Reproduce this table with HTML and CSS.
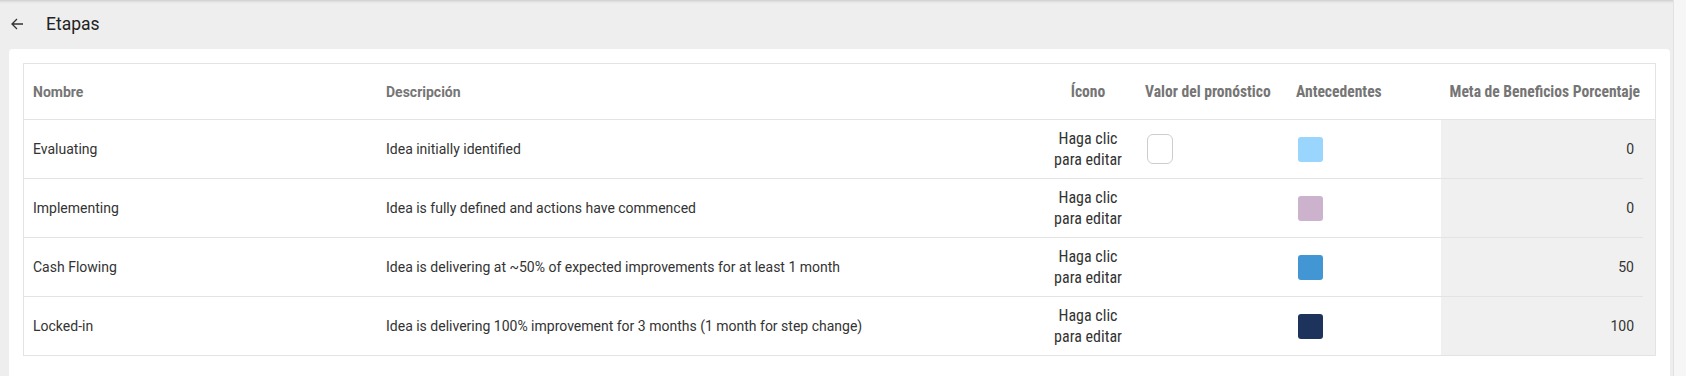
FILE: index.html
```html
<!DOCTYPE html>
<html lang="es">
<head>
<meta charset="utf-8">
<title>Etapas</title>
<link rel="stylesheet" href="styles.css">
</head>
<body>
<div class="page">
  <div class="main">
    <header class="topbar">
      <button class="back" aria-label="Volver">
        <svg width="14" height="14" viewBox="0 0 14 14"><path d="M13 7H2M7 2L2 7l5 5" fill="none" stroke="#333" stroke-width="1.3"/></svg>
      </button>
      <h1 class="title">Etapas</h1>
    </header>
    <section class="card">
      <table class="grid">
        <colgroup>
          <col class="c-name"><col class="c-desc"><col class="c-icon"><col class="c-val"><col class="c-bg"><col class="c-meta"><col class="c-gut">
        </colgroup>
        <thead>
          <tr>
            <th class="h-left">Nombre</th>
            <th class="h-left">Descripción</th>
            <th class="h-cond h-center">Ícono</th>
            <th class="h-cond h-val">Valor del pronóstico</th>
            <th class="h-cond">Antecedentes</th>
            <th class="h-cond h-right" colspan="2">Meta de Beneficios Porcentaje</th>
          </tr>
        </thead>
        <tbody>
          <tr>
            <td>Evaluating</td>
            <td>Idea initially identified</td>
            <td class="edit">Haga clic<br>para editar</td>
            <td class="val"><span class="check"></span></td>
            <td class="bgc"><span class="swatch sw-1"></span></td>
            <td class="meta">0</td>
            <td class="gut"></td>
          </tr>
          <tr>
            <td>Implementing</td>
            <td>Idea is fully defined and actions have commenced</td>
            <td class="edit">Haga clic<br>para editar</td>
            <td class="val"></td>
            <td class="bgc"><span class="swatch sw-2"></span></td>
            <td class="meta">0</td>
            <td class="gut"></td>
          </tr>
          <tr>
            <td>Cash Flowing</td>
            <td>Idea is delivering at ~50% of expected improvements for at least 1 month</td>
            <td class="edit">Haga clic<br>para editar</td>
            <td class="val"></td>
            <td class="bgc"><span class="swatch sw-3"></span></td>
            <td class="meta">50</td>
            <td class="gut"></td>
          </tr>
          <tr>
            <td>Locked-in</td>
            <td>Idea is delivering 100% improvement for 3 months (1 month for step change)</td>
            <td class="edit">Haga clic<br>para editar</td>
            <td class="val"></td>
            <td class="bgc"><span class="swatch sw-4"></span></td>
            <td class="meta">100</td>
            <td class="gut"></td>
          </tr>
        </tbody>
      </table>
    </section>
  </div>
  <div class="track"></div>
</div>
</body>
</html>
```

FILE: styles.css
```css
html, body {
  margin: 0;
  padding: 0;
  height: 100%;
}
body {
  background: #eeeeee;
  font-family: Roboto, "Liberation Sans", Arial, sans-serif;
  color: #333;
  overflow: hidden;
}
.page {
  display: flex;
  height: 100%;
  background: linear-gradient(#cfcfcf 0, #e6e6e6 2px, #eeeeee 4px);
}
.main {
  flex: 1;
  padding: 0 3px 0 9px;
}
.track {
  width: 13px;
  border-left: 1px solid #e2e2e2;
  background: #f6f6f6;
}
.topbar {
  height: 49px;
  display: flex;
  align-items: center;
  padding-bottom: 2px;
  box-sizing: border-box;
}
.back {
  border: 0;
  background: none;
  padding: 0;
  width: 15px;
  height: 15px;
  display: flex;
  align-items: center;
  justify-content: center;
  cursor: pointer;
}
.title {
  margin: 0 0 0 22px;
  font-size: 17.5px;
  font-weight: 400;
  color: #222;
}
.card {
  background: #fff;
  border-radius: 4px;
  padding: 14px 14px 30px 14px;
  min-height: 320px;
  box-sizing: border-box;
}
.grid {
  border-collapse: separate;
  border-spacing: 0;
  border: 1px solid #e3e3e3;
  table-layout: fixed;
  width: 1633px;
  font-size: 14px;
}
.c-name { width: 353px; }
.c-desc { width: 671px; }
.c-icon { width: 80px; }
.c-val { width: 159px; }
.c-bg { width: 154px; }
.c-meta { width: 202px; }
.c-gut { width: 12px; }
th {
  height: 55px;
  padding: 0 9px;
  border-bottom: 1px solid #e3e3e3;
  color: #757575;
  font-weight: 700;
  text-align: left;
  vertical-align: middle;
  white-space: nowrap;
}
.h-cond {
  font-family: "Roboto Condensed", "Liberation Sans Narrow", Roboto, sans-serif;
  font-stretch: condensed;
  font-size: 15.6px;
  font-weight: 700;
}
.h-center { text-align: center; padding: 0; }
.h-val { padding-left: 17px; }
.h-right { text-align: right; padding-right: 15px; padding-left: 0; }
td {
  height: 58px;
  padding: 0 9px;
  border-bottom: 1px solid #e3e3e3;
  vertical-align: middle;
  color: #333;
}
tbody tr:last-child td { border-bottom: 0; }
.edit {
  text-align: center;
  line-height: 21px;
  font-family: "Roboto Condensed", "Liberation Sans Narrow", Roboto, sans-serif;
  font-stretch: condensed;
  font-size: 16px;
  padding: 0;
}
.val { padding-left: 19px; }
.check {
  display: block;
  width: 26px;
  height: 30px;
  box-sizing: border-box;
  border: 1.5px solid #cdcdcd;
  border-radius: 6px;
  background: #fff;
}
.swatch {
  display: block;
  width: 25px;
  height: 25px;
  border-radius: 3px;
  margin-left: 2px;
}
.sw-1 { background: #99d5fc; }
.sw-2 { background: #cdb2cd; }
.sw-3 { background: #4196d3; }
.sw-4 { background: #1e335c; }
.meta {
  background: #f0f0f0;
  text-align: right;
  padding-right: 9px;
}
.gut {
  background: #f0f0f0;
  border-bottom: 0;
  padding: 0;
}
```
